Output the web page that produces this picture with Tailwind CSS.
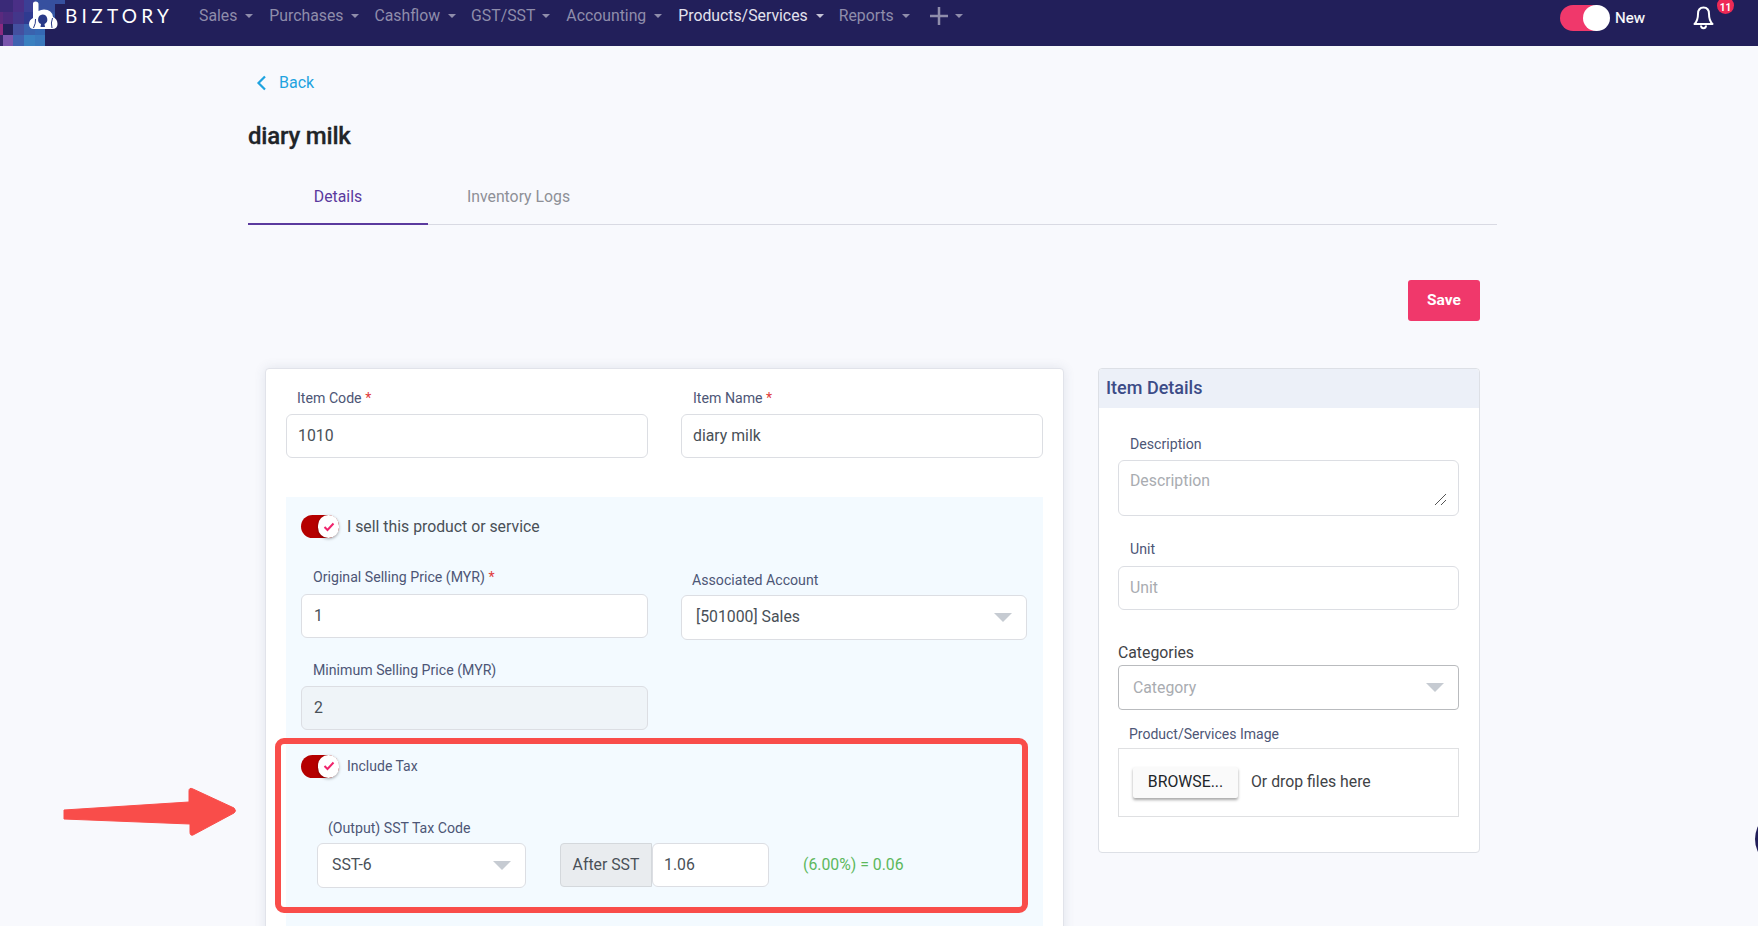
<!DOCTYPE html>
<html lang="en">
<head>
    <meta charset="UTF-8">
    <meta name="viewport" content="width=device-width, initial-scale=1.0">
    <script src="https://cdn.jsdelivr.net/npm/@tailwindcss/browser@4"></script>
    <title>diary milk</title>
</head>
<body class="relative h-[926px] overflow-hidden bg-[#f8f9fd] font-['Roboto',sans-serif] text-[15.8px] text-[#495057]">

    <!-- top nav -->
    <header class="relative flex h-[46px] items-start bg-[#221f5a]">
        <svg class="absolute left-0 top-0" width="70" height="46" viewBox="0 0 70 46">
            <rect x="0" y="0" width="13" height="12" fill="#3a2a78"/>
            <rect x="13" y="0" width="11" height="12" fill="#4a2f86"/>
            <rect x="24" y="0" width="11" height="12" fill="#3b3f95"/>
            <rect x="35" y="0" width="20" height="12" fill="#36509f"/>
            <rect x="55" y="0" width="10" height="4" fill="#36509f"/>
            <rect x="0" y="12" width="3" height="12" fill="#5a2a7e"/>
            <rect x="3" y="12" width="10" height="12" fill="#4b2b7e"/>
            <rect x="13" y="12" width="11" height="12" fill="#43368a"/>
            <rect x="24" y="12" width="11" height="12" fill="#2f3a90"/>
            <rect x="35" y="12" width="20" height="12" fill="#3558a6"/>
            <rect x="0" y="24" width="3" height="11" fill="#8a2a80"/>
            <rect x="3" y="24" width="10" height="11" fill="#23205c"/>
            <rect x="13" y="24" width="11" height="11" fill="#4450a0"/>
            <rect x="24" y="24" width="11" height="11" fill="#3a62ae"/>
            <rect x="35" y="24" width="10" height="11" fill="#3568b4"/>
            <rect x="0" y="35" width="3" height="11" fill="#33266c"/>
            <rect x="3" y="35" width="10" height="11" fill="#7a55ad"/>
            <rect x="13" y="35" width="11" height="11" fill="#3f62b0"/>
            <rect x="24" y="35" width="11" height="11" fill="#3a80c0"/>
            <rect x="35" y="35" width="10" height="11" fill="#3a78bc"/>
            <path d="M33 3.500Q33 1.500 35.500 1.500Q38.500 1.500 38.500 4L38.500 11Q41 9.500 44 9.500Q52 9.500 53 17Q57.500 19 57.500 24Q57.500 29 52 29L34 29Q29 29 29 24Q29 20 33 18Z" fill="#ffffff"/>
            <path d="M42.500 14.500A5 5 0 0 1 44.500 24L45 27H40.500L41 24A5 5 0 0 1 42.500 14.500Z" fill="#2a3a88"/>
            <path d="M33.500 28Q36 23 35.500 19M52 28Q50.500 23 52.500 18" fill="none" stroke="#2a3a88" stroke-width="1"/>
        </svg>
        <span class="absolute left-[65px] top-[4px] font-['Lato',sans-serif] text-[19px] leading-[23px] tracking-[4.3px] text-white">BIZTORY</span>

        <nav class="ml-[199px] flex h-[32px] items-center text-[#8f8dab]">
            <a class="flex items-center">Sales<span class="ml-[8px] mr-[16px] h-0 w-0 border-x-[4px] border-t-[4px] border-x-transparent border-t-[#8f8dab]"></span></a>
            <a class="flex items-center">Purchases<span class="ml-[8px] mr-[15px] h-0 w-0 border-x-[4px] border-t-[4px] border-x-transparent border-t-[#8f8dab]"></span></a>
            <a class="flex items-center">Cashflow<span class="ml-[8px] mr-[15px] h-0 w-0 border-x-[4px] border-t-[4px] border-x-transparent border-t-[#8f8dab]"></span></a>
            <a class="flex items-center">GST/SST<span class="ml-[7px] mr-[16px] h-0 w-0 border-x-[4px] border-t-[4px] border-x-transparent border-t-[#8f8dab]"></span></a>
            <a class="flex items-center">Accounting<span class="ml-[8px] mr-[16px] h-0 w-0 border-x-[4px] border-t-[4px] border-x-transparent border-t-[#8f8dab]"></span></a>
            <a class="flex items-center text-[#e3e2ee]">Products/Services<span class="ml-[8px] mr-[15px] h-0 w-0 border-x-[4px] border-t-[4px] border-x-transparent border-t-[#c5c4d6]"></span></a>
            <a class="flex items-center">Reports<span class="ml-[8px] mr-[19px] h-0 w-0 border-x-[4px] border-t-[4px] border-x-transparent border-t-[#8f8dab]"></span></a>
            <a class="flex items-center">
                <svg width="20" height="20" viewBox="0 0 20 20"><path d="M10 1V19M1 10H19" stroke="#8f8dab" stroke-width="2.500"/></svg>
                <span class="ml-[6px] h-0 w-0 border-x-[4px] border-t-[4px] border-x-transparent border-t-[#8f8dab]"></span>
            </a>
        </nav>

        <div class="ml-auto flex h-[36px] items-center pr-[24px]">
            <div class="relative h-[26px] w-[50px]">
                <div class="h-[26px] w-[44px] rounded-full bg-[#f0386b]"></div>
                <div class="absolute right-0 top-0 h-[26px] w-[27px] rounded-full bg-white"></div>
            </div>
            <span class="ml-[5px] text-[15px] text-white [-webkit-text-stroke:0.2px_#ffffff]">New</span>
            <div class="relative ml-[48px] h-[32px] w-[41px]">
                <svg class="absolute left-0 top-[4px]" width="21" height="24" viewBox="0 0 21 24" fill="none" stroke="#ffffff" stroke-width="2" stroke-linejoin="round">
                    <path d="M10.500 1.500C6.500 1.500 5 4.500 5 8C5 13 4 15.500 1.500 18H19.500C17 15.500 16 13 16 8C16 4.500 14.500 1.500 10.500 1.500Z"/>
                    <path d="M8 19.500C8 23 13 23 13 19.500"/>
                </svg>
                <span class="absolute left-[24px] top-[-5px] flex h-[17px] w-[17px] items-center justify-center rounded-full bg-[#ee2a55] pt-[5px] text-[10px] font-bold leading-none text-white">11</span>
            </div>
        </div>
    </header>

    <main class="ml-[248px] w-[1249px]">
        <a class="mt-[26px] flex h-[22px] items-center pl-[8px] text-[16px] text-[#1fa3e0]">
            <svg width="11" height="16" viewBox="0 0 11 16" fill="none" stroke="#1fa3e0" stroke-width="2.200"><path d="M9 1.500L2.500 8L9 14.500"/></svg>
            <span class="ml-[12px]">Back</span>
        </a>
        <h1 class="mt-[26px] h-[32px] text-[24px] font-medium leading-[32px] tracking-[-0.2px] text-[#212529] [-webkit-text-stroke:0.3px_#212529]">diary milk</h1>

        <div class="mt-[23px] flex h-[50px] border-b border-[#d9dae3] text-[15.8px]">
            <div class="flex h-[50px] w-[180px] items-center justify-center border-b-2 border-[#5b3a9e] pb-[4px] text-[#5b3a9e]">Details</div>
            <div class="flex h-[49px] w-[180px] items-center justify-center pb-[5px] pl-[1px] text-[#8e9097]">Inventory Logs</div>
        </div>

        <div class="mt-[55px] flex justify-end pr-[17px]">
            <button class="h-[41px] w-[72px] rounded-[3px] bg-[#f0386b] text-[15.5px] font-bold text-white">Save</button>
        </div>

        <div class="mt-[47px] flex items-start pl-[17px]">
            <!-- main form card -->
            <section class="h-[600px] w-[799px] rounded-[4px] border border-[#e1e3ea] bg-white px-[20px] pt-[19px] shadow-[0_0_12px_rgba(60,70,110,0.12)]">
                <div class="grid grid-cols-[362px_362px] gap-x-[33px]">
                    <div>
                        <label class="ml-[11px] block h-[20px] text-[14.15px] leading-[20px] text-[#4d5676]">Item Code <span class="text-[#e03b3b]">*</span></label>
                        <div class="mt-[6px] flex h-[44px] items-center rounded-[6px] border border-[#dcdee3] bg-white px-[11px]">1010</div>
                    </div>
                    <div>
                        <label class="ml-[12px] block h-[20px] text-[14.15px] leading-[20px] text-[#4d5676]">Item Name <span class="text-[#e03b3b]">*</span></label>
                        <div class="mt-[6px] flex h-[44px] items-center rounded-[6px] border border-[#dcdee3] bg-white px-[11px]">diary milk</div>
                    </div>
                </div>

                <div class="mt-[39px] h-[500px] bg-[#f3faff] pl-[15px] pr-[16px] pt-[18px]">
                    <div class="flex items-center">
                        <div class="relative h-[23px] w-[38px] rounded-full bg-[#b50000]">
                            <div class="absolute right-0 top-0 flex h-[23px] w-[21px] items-center justify-center rounded-full bg-white shadow-[0_1px_3px_rgba(0,0,0,0.35)]">
                                <svg width="12" height="10" viewBox="0 0 12 10" fill="none" stroke="#f0246c" stroke-width="2"><path d="M1.500 5L4.500 8L10.500 1.500"/></svg>
                            </div>
                        </div>
                        <span class="ml-[8px]">I sell this product or service</span>
                    </div>

                    <div class="grid grid-cols-[347px_346px] gap-x-[33px]">
                        <div class="pt-[28px]">
                            <label class="ml-[12px] block h-[20px] text-[14.15px] leading-[20px] text-[#4d5676]">Original Selling Price (MYR) <span class="text-[#e03b3b]">*</span></label>
                            <div class="mt-[7px] flex h-[44px] items-center rounded-[6px] border border-[#dcdee3] bg-white px-[12px]">1</div>
                        </div>
                        <div class="pt-[31px]">
                            <label class="ml-[11px] block h-[20px] text-[14.15px] leading-[20px] text-[#4d5676]">Associated Account</label>
                            <div class="mt-[5px] flex h-[45px] items-center justify-between rounded-[6px] border border-[#dcdee3] bg-white pl-[14px] pr-[14px]">
                                [501000] Sales
                                <span class="h-0 w-0 border-x-[9px] border-t-[9px] border-x-transparent border-t-[#c6cbd2]"></span>
                            </div>
                        </div>
                    </div>

                    <div class="mt-[20px] w-[347px]">
                        <label class="ml-[12px] block h-[20px] text-[14.15px] leading-[20px] text-[#4d5676]">Minimum Selling Price (MYR)</label>
                        <div class="mt-[6px] flex h-[44px] items-center rounded-[6px] border border-[#dcdee3] bg-[#eff4f8] px-[12px]">2</div>
                    </div>

                    <div class="mt-[25px] flex items-center">
                        <div class="relative h-[23px] w-[38px] rounded-full bg-[#b50000]">
                            <div class="absolute right-0 top-0 flex h-[23px] w-[21px] items-center justify-center rounded-full bg-white shadow-[0_1px_3px_rgba(0,0,0,0.35)]">
                                <svg width="12" height="10" viewBox="0 0 12 10" fill="none" stroke="#f0246c" stroke-width="2"><path d="M1.500 5L4.500 8L10.500 1.500"/></svg>
                            </div>
                        </div>
                        <span class="ml-[8px] text-[14px] text-[#4d5676]">Include Tax</span>
                    </div>

                    <label class="ml-[27px] mt-[40px] block h-[20px] text-[14.15px] leading-[20px] text-[#4d5676]">(Output) SST Tax Code</label>
                    <div class="ml-[16px] mt-[5px] flex items-center">
                        <div class="flex h-[45px] w-[209px] items-center justify-between rounded-[6px] border border-[#dcdee3] bg-white pl-[14px] pr-[14px]">
                            SST-6
                            <span class="h-0 w-0 border-x-[9px] border-t-[9px] border-x-transparent border-t-[#c6cbd2]"></span>
                        </div>
                        <div class="ml-[34px] flex h-[44px] w-[92px] items-center justify-center rounded-l-[4px] border border-[#d4d8dc] bg-[#e9ecef]">After SST</div>
                        <div class="flex h-[44px] w-[117px] items-center rounded-[6px] border border-[#dcdee3] bg-white px-[11px]">1.06</div>
                        <span class="ml-[34px] text-[#5cb85c]">(6.00%) = 0.06</span>
                    </div>
                </div>
            </section>

            <!-- item details card -->
            <aside class="ml-[34px] w-[382px] rounded-[4px] border border-[#dde0e6] bg-white">
                <div class="flex h-[39px] items-center rounded-t-[4px] bg-[#ecf0f8] pb-[2px] pl-[7px] text-[18px] font-medium text-[#3c4c87]">Item Details</div>
                <div class="pb-[35px] pl-[19px] pr-[20px] pt-[26px]">
                    <label class="ml-[12px] block h-[20px] text-[14.15px] leading-[20px] text-[#4d5676]">Description</label>
                    <div class="relative mt-[6px] h-[56px] rounded-[6px] border border-[#dcdee3] px-[11px] pt-[8px] text-[#a9acb1]">
                        Description
                        <svg class="absolute bottom-[9px] right-[11px]" width="13" height="13" viewBox="0 0 13 13" fill="none" stroke="#555" stroke-width="1"><path d="M1 12L12 1M7 12L12 7"/></svg>
                    </div>
                    <label class="ml-[12px] mt-[23px] block h-[20px] text-[14.15px] leading-[20px] text-[#4d5676]">Unit</label>
                    <div class="mt-[7px] flex h-[44px] items-center rounded-[6px] border border-[#dcdee3] px-[11px] text-[#a9acb1]">Unit</div>
                    <label class="mt-[32px] block h-[22px] leading-[22px] text-[#3f4347]">Categories</label>
                    <div class="mt-[1px] flex h-[45px] items-center justify-between rounded-[4px] border border-[#b9bbbe] pl-[14px] pr-[14px] text-[#a9acb1]">
                        Category
                        <span class="h-0 w-0 border-x-[9px] border-t-[9px] border-x-transparent border-t-[#c6cbd2]"></span>
                    </div>
                    <label class="ml-[11px] mt-[14px] block h-[20px] text-[14px] leading-[20px] text-[#4d5676]">Product/Services Image</label>
                    <div class="mt-[4px] flex h-[69px] items-center border border-[#dfe0e2] pb-[1px] pl-[14px]">
                        <button class="h-[31px] w-[105px] rounded-[2px] bg-[#fafafa] text-[#212529] shadow-[0_2px_3px_rgba(0,0,0,0.35)]">BROWSE...</button>
                        <span class="ml-[13px] text-[#3f4347]">Or drop files here</span>
                    </div>
                </div>
            </aside>
        </div>
    </main>

    <!-- annotation drawn over the screenshot -->
    <div class="absolute left-[275px] top-[738px] h-[175px] w-[753px] rounded-[9px] border-[6px] border-[#f94d4a]"></div>
    <svg class="absolute left-[60px] top-[784px]" width="182" height="56" viewBox="0 0 182 56">
        <path d="M4 26L129 18V7Q129 3 133 5L174 24Q177 27 174 29L133 51Q130 52 130 48V40L4 35Z" fill="#f94d4a" stroke="#f94d4a" stroke-width="1" stroke-linejoin="round"/>
    </svg>

    <!-- chat bubble cut off by the right edge -->
    <div class="absolute left-[1755px] top-[810px] h-[58px] w-[58px] rounded-full bg-[#221f5a]"></div>
</body>
</html>
